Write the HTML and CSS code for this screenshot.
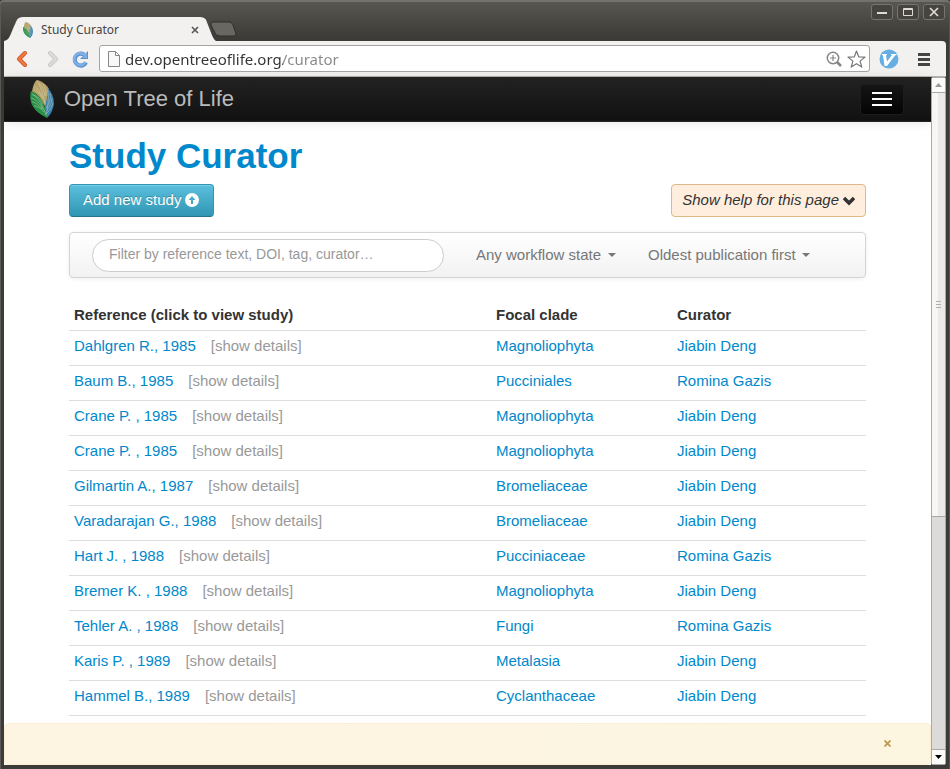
FILE: index.html
```html
<!DOCTYPE html>
<html lang="en">
<head>
<meta charset="utf-8">
<title>Study Curator</title>
<link rel="stylesheet" href="styles.css">
</head>
<body>
<svg class="defs" aria-hidden="true">
  <symbol id="leaf" viewBox="0 0 24 38">
    <path fill="#b5a066" d="M2 12C3 5 5 1 7 0c5 1 10 5 12 9l-3 20C12 19 7 13 2 12Z"/>
    <path fill="#3a80ad" d="M18 8c6 7 7 15 5 20-1 4-3 7-6 10-2-5-3-9-1-15 1-5 2-10 2-15Z"/>
    <path fill="#2a9049" d="M1 11c7 3 12 9 14 17 1 4 2 7 2 10C8 34 2 27 1 22c-1-4-1-8 0-11Z"/>
    <g fill="none" stroke="#dde4c8" stroke-width=".7" opacity=".6">
      <path d="M7 1c3 5 6 12 8 23M4 6c4 2 6 6 9 13M4 9c3 1 5 4 8 8M9 3c3 3 5 7 6 13M13 4c2 3 3 7 3 12"/>
      <path d="M18 10c1 9 0 17-2 25M20 13c1 5 0 10-4 15M22 18c0 4-2 8-5 12M23 23c-1 4-3 7-6 10"/>
      <path d="M2 14c7 4 11 12 14 21M1 18c5 1 9 6 12 11M2 22c4 0 7 4 10 7M4 26c4 0 7 3 10 6M3 15c5 1 8 5 10 9"/>
    </g>
  </symbol>
</svg>
<div class="window">
  <header class="titlebar">
    <div class="tab">
      <svg class="tab-shape" viewBox="0 0 212 26" preserveAspectRatio="none" aria-hidden="true"><path fill="#f2f1f0" d="M0 26C5 25 6 21 9 13L13 4Q15 1 19 1H196Q200 1 202 4L208 20Q210 25 212 26Z"/></svg>
      <svg class="tab-leaf" aria-hidden="true"><use href="#leaf"/></svg>
      <span class="tab-title">Study Curator</span>
      <button class="tab-close" aria-label="Close tab"><svg width="8" height="8" viewBox="0 0 8 8"><path d="M1 1l6 6M7 1L1 7" stroke="#555" stroke-width="1.6"/></svg></button>
    </div>
    <button class="new-tab" aria-label="New tab"><svg width="27" height="17" viewBox="0 0 27 17"><path fill="#686762" stroke="#2f2e2b" d="M3 1h16q3 0 4 3l3 9q0 2-3 2H10q-4 0-5-3L1 4Q0 1 3 1Z"/></svg></button>
    <div class="controls">
      <button aria-label="Minimize"><svg width="12" height="10" viewBox="0 0 12 10"><path fill="#dfdbd2" d="M1 5h10v2H1z"/></svg></button>
      <button aria-label="Maximize"><svg width="12" height="10" viewBox="0 0 12 10"><path fill="none" stroke="#dfdbd2" d="M1.500 1.500h9v7h-9zM1 2.500h10"/></svg></button>
      <button aria-label="Close"><svg width="12" height="10" viewBox="0 0 12 10"><path stroke="#dfdbd2" stroke-width="1.700" d="M2 1l8 8M10 1L2 9"/></svg></button>
    </div>
  </header>
  <div class="toolbar">
    <button aria-label="Back"><svg width="20" height="20" viewBox="0 0 20 20"><path d="M13 4l-6 6 6 6" fill="none" stroke="#c9501f" stroke-width="4" stroke-linecap="round" stroke-linejoin="round"/><path d="M13 4l-6 6 6 6" fill="none" stroke="#f0783f" stroke-width="2.500" stroke-linecap="round" stroke-linejoin="round"/></svg></button>
    <button aria-label="Forward"><svg width="20" height="20" viewBox="0 0 20 20"><path d="M9 4l6 6-6 6" fill="none" stroke="#c5c3c1" stroke-width="4" stroke-linecap="round" stroke-linejoin="round"/><path d="M9 4l6 6-6 6" fill="none" stroke="#dddbd9" stroke-width="2.500" stroke-linecap="round" stroke-linejoin="round"/></svg></button>
    <button aria-label="Reload"><svg width="20" height="20" viewBox="0 0 20 20"><path d="M14 5.500a6 6 0 1 0 2 8" fill="none" stroke="#5a90cf" stroke-width="4.200"/><path fill="#5a90cf" d="M18 2v8h-8z"/><path d="M14 5.500a6 6 0 1 0 1.500 7.500" fill="none" stroke="#7cb0e6" stroke-width="2.600"/><path fill="#7cb0e6" d="M17 4v5h-5z"/></svg></button>
    <div class="omnibox">
      <svg width="12" height="16" viewBox="0 0 12 16" aria-hidden="true"><path fill="#f8f8f8" stroke="#858585" d="M.5.500h7l4 4v11H.5zM7.500.500v4h4"/></svg>
      <input class="url" type="text" aria-label="Address" value="dev.opentreeoflife.org/curator">
      <button aria-label="Zoom"><svg width="16" height="16" viewBox="0 0 16 16"><g fill="none" stroke="#858585"><circle cx="7" cy="7" r="5.700" stroke-width="1.500"/><path d="M4 7h6M7 4v6" stroke-width="1.200"/><path d="M11 11l4 4" stroke-width="2.500"/></g></svg></button>
      <button aria-label="Bookmark"><svg width="19" height="18" viewBox="0 0 19 18"><path fill="#fff" stroke="#777" stroke-width="1.200" stroke-linejoin="round" d="M9.500 1l2.200 5.800 6.300.3-4.900 4 1.700 6-5.300-3.400-5.300 3.400 1.700-6L1 7.100l6.300-.3z"/></svg></button>
    </div>
    <button aria-label="Vimeo"><svg width="20" height="20" viewBox="0 0 20 20"><circle cx="10" cy="10" r="9.500" fill="#64aee3"/><path fill="#fff" d="M3 5h5v1l-1 .5 1 6L13 6h-1V5h5.500v1L16 6.500 8 17H5.500L4 6.500 3 6z"/></svg></button>
    <button class="chrome-menu" aria-label="Browser menu"><svg width="14" height="14" viewBox="0 0 14 14"><path fill="#444" d="M1 1h12v3H1zM1 6h12v3H1zM1 11h12v3H1z"/></svg></button>
  </div>
  <div class="viewport">
    <div class="page">
      <nav class="navbar">
        <a class="brand" href="#"><svg class="brand-leaf" aria-hidden="true"><use href="#leaf"/></svg>Open Tree of Life</a>
        <button class="nav-toggle" aria-label="Menu"><span></span><span></span><span></span></button>
      </nav>
      <main class="content">
        <h1>Study Curator</h1>
        <div class="actions">
          <button class="btn btn-info">Add new study <svg width="14" height="14" viewBox="0 0 14 14" aria-hidden="true"><path fill="#fff" fill-rule="evenodd" d="M7 0a7 7 0 1 1 0 14A7 7 0 0 1 7 0ZM7 3L3.500 7H6v4h2V7h2.500z"/></svg></button>
          <button class="btn btn-help">Show help for this page <svg width="12" height="14" viewBox="0 0 12 14" aria-hidden="true"><path fill="none" stroke="#333" stroke-width="3.400" d="M1 5l5 5 5-5"/></svg></button>
        </div>
        <form class="filters">
          <input class="search" type="text" aria-label="Filter studies" placeholder="Filter by reference text, DOI, tag, curator…">
          <span class="pick"><select aria-label="Workflow state"><option>Any workflow state</option></select></span>
          <span class="pick"><select aria-label="Sort order"><option>Oldest publication first</option></select></span>
        </form>
        <table>
          <colgroup><col><col class="col-clade"><col class="col-curator"></colgroup>
          <thead><tr><th>Reference (click to view study)</th><th>Focal clade</th><th>Curator</th></tr></thead>
          <tbody>
            <tr><td><a href="#">Dahlgren R., 1985</a><a class="more" href="#">[show details]</a></td><td><a href="#">Magnoliophyta</a></td><td><a href="#">Jiabin Deng</a></td></tr>
            <tr><td><a href="#">Baum B., 1985</a><a class="more" href="#">[show details]</a></td><td><a href="#">Pucciniales</a></td><td><a href="#">Romina Gazis</a></td></tr>
            <tr><td><a href="#">Crane P. , 1985</a><a class="more" href="#">[show details]</a></td><td><a href="#">Magnoliophyta</a></td><td><a href="#">Jiabin Deng</a></td></tr>
            <tr><td><a href="#">Crane P. , 1985</a><a class="more" href="#">[show details]</a></td><td><a href="#">Magnoliophyta</a></td><td><a href="#">Jiabin Deng</a></td></tr>
            <tr><td><a href="#">Gilmartin A., 1987</a><a class="more" href="#">[show details]</a></td><td><a href="#">Bromeliaceae</a></td><td><a href="#">Jiabin Deng</a></td></tr>
            <tr><td><a href="#">Varadarajan G., 1988</a><a class="more" href="#">[show details]</a></td><td><a href="#">Bromeliaceae</a></td><td><a href="#">Jiabin Deng</a></td></tr>
            <tr><td><a href="#">Hart J. , 1988</a><a class="more" href="#">[show details]</a></td><td><a href="#">Pucciniaceae</a></td><td><a href="#">Romina Gazis</a></td></tr>
            <tr><td><a href="#">Bremer K. , 1988</a><a class="more" href="#">[show details]</a></td><td><a href="#">Magnoliophyta</a></td><td><a href="#">Jiabin Deng</a></td></tr>
            <tr><td><a href="#">Tehler A. , 1988</a><a class="more" href="#">[show details]</a></td><td><a href="#">Fungi</a></td><td><a href="#">Romina Gazis</a></td></tr>
            <tr><td><a href="#">Karis P. , 1989</a><a class="more" href="#">[show details]</a></td><td><a href="#">Metalasia</a></td><td><a href="#">Jiabin Deng</a></td></tr>
            <tr><td><a href="#">Hammel B., 1989</a><a class="more" href="#">[show details]</a></td><td><a href="#">Cyclanthaceae</a></td><td><a href="#">Jiabin Deng</a></td></tr>
          </tbody>
        </table>
      </main>
      <div class="notice" role="status"><button aria-label="Dismiss"><svg width="7" height="7" viewBox="0 0 7 7"><path stroke="#c09853" stroke-width="1.800" d="M.5.500l6 6M6.500.500l-6 6"/></svg></button></div>
    </div>
    <div class="scrollbar" aria-hidden="true">
      <div class="arrow"><svg width="7" height="4" viewBox="0 0 7 4"><path fill="#9a9a98" d="M0 4l3.500-4L7 4z"/></svg></div>
      <div class="thumb"><svg width="5" height="7" viewBox="0 0 5 7"><path stroke="#b0afad" d="M0 .5h5M0 3.500h5M0 6.500h5"/></svg></div>
      <div class="track"></div>
      <div class="arrow"><svg width="7" height="4" viewBox="0 0 7 4"><path fill="#000" d="M0 0l3.500 4L7 0z"/></svg></div>
    </div>
  </div>
</div>
</body>
</html>
```
FILE: styles.css
```css
* { box-sizing: border-box; }
body {
  margin: 0;
  background: #3c3b37;
  color: #333;
  font: 15px/20px "Liberation Sans", Arial, sans-serif;
}
button {
  padding: 0;
  border: 0;
  background: none;
  font: inherit;
  color: inherit;
}
svg { display: block; }
a { color: #0088cc; text-decoration: none; }
.defs { position: absolute; width: 0; height: 0; }

.window {
  display: flex;
  flex-direction: column;
  height: 100vh;
  padding: 0 4px 4px;
  border-radius: 4px 4px 0 0;
  background: linear-gradient(#5a5852, #3c3b37 38px);
  box-shadow: inset 0 2px #74726d, inset 1px 0 #5b5a56, inset -1px 0 #55544f;
}
.titlebar {
  display: flex;
  flex: none;
  align-items: flex-end;
  height: 41px;
}
.tab {
  position: relative;
  display: flex;
  align-items: center;
  width: 212px;
  height: 25px;
  padding: 2px 17px 0 18px;
  font: 12px/16px "Noto Sans", sans-serif;
  color: #444;
}
.tab-shape { position: absolute; inset: 0; width: 100%; height: 100%; }
.tab-leaf { position: relative; width: 12px; height: 16px; margin-right: 7px; }
.tab-title { position: relative; flex: 1; }
.tab-close { position: relative; }
.new-tab { align-self: flex-end; margin: 0 0 3px -6px; }
.controls {
  display: flex;
  gap: 4px;
  align-self: flex-start;
  margin: 4px 1px 0 auto;
}
.controls button {
  display: grid;
  place-items: center;
  width: 22px;
  height: 16px;
  border: 1px solid #77756f;
  border-radius: 3px;
  background: #45443f;
}

.toolbar {
  display: flex;
  flex: none;
  align-items: center;
  gap: 9px;
  height: 36px;
  padding: 0 15px 0 8px;
  border-bottom: 1px solid #b6b4b2;
  border-radius: 0 4px 0 0;
  background: #f2f1f0;
}
.omnibox {
  display: flex;
  flex: 1;
  align-items: center;
  gap: 5px;
  height: 27px;
  padding: 0 3px 0 8px;
  border: 1px solid #a5a4a2;
  border-radius: 3px;
  background: #fff;
}
.url {
  flex: 1;
  min-width: 0;
  padding: 0;
  border: 0;
  outline: 0;
  background: linear-gradient(to right, #333 158px, #888 158px);
  background-clip: text;
  color: transparent;
  font: 15px/20px "Noto Sans", sans-serif;
}
.chrome-menu { margin-left: 9px; }

.viewport { display: flex; flex: 1; min-height: 0; }
.page {
  display: flex;
  flex: 1;
  flex-direction: column;
  min-width: 0;
  background: #fff;
}
.navbar {
  display: flex;
  flex: none;
  align-items: center;
  justify-content: space-between;
  height: 45px;
  padding: 0 27px 0 26px;
  border-bottom: 1px solid #252525;
  background: linear-gradient(#222, #111);
  box-shadow: 0 1px 10px rgba(0, 0, 0, .1);
}
.brand {
  display: flex;
  align-items: center;
  gap: 10px;
  color: #bbb;
  font-size: 22px;
}
.brand-leaf { width: 24px; height: 38px; }
.nav-toggle {
  display: flex;
  flex-direction: column;
  align-items: center;
  justify-content: center;
  gap: 4px;
  width: 44px;
  height: 31px;
  border: 1px solid #1c1c1c;
  border-radius: 4px;
  background: linear-gradient(#151515, #040404);
}
.nav-toggle span { width: 20px; height: 2px; background: #fff; }

.content { flex: 1; min-height: 0; overflow: hidden; padding: 14px 65px 0; }
h1 { margin: 0 0 8px; color: #0088cc; font-size: 35px; line-height: 40px; }
.actions { display: flex; justify-content: space-between; }
.btn {
  display: flex;
  align-items: center;
  gap: 4px;
  height: 33px;
  border: 1px solid;
  border-radius: 4px;
}
.btn-info {
  padding: 0 14px 2px 13px;
  border-color: #2f96b4 #2f96b4 #24748c;
  background: linear-gradient(#5bc0de, #2f96b4);
  box-shadow: inset 0 1px rgba(255, 255, 255, .2);
  color: #fff;
  text-shadow: 0 -1px rgba(0, 0, 0, .25);
}
.btn-help {
  padding: 0 10px 2px;
  border-color: #deb887;
  background: #ffeedd;
  font-style: italic;
}
.filters {
  display: flex;
  align-items: center;
  height: 46px;
  margin: 15px 0 22px;
  padding: 0 22px;
  border: 1px solid #d4d4d4;
  border-radius: 4px;
  background: linear-gradient(#fff, #f2f2f2);
  box-shadow: 0 1px 4px rgba(0, 0, 0, .067);
}
.search {
  flex: 0 1 352px;
  min-width: 0;
  height: 33px;
  margin-right: 32px;
  padding: 0 16px 2px;
  border: 1px solid #ccc;
  border-radius: 17px;
  background: #fff;
  font: 14px/20px "Liberation Sans", Arial, sans-serif;
}
.search::placeholder { color: #999; }
.pick { display: flex; flex: none; align-items: center; gap: 6px; color: #777; }
.pick + .pick { margin-left: 32px; }
.pick::after { content: ""; border: 4px solid transparent; border-top-color: #777; border-bottom: 0; }
.pick select {
  appearance: none;
  padding: 0;
  border: 0;
  background: none;
  color: #777;
  font: inherit;
}

table { width: 100%; border-collapse: separate; border-spacing: 0; table-layout: fixed; }
.col-clade { width: 181px; }
.col-curator { width: 194px; }
th, td { padding: 5px; text-align: left; }
td { padding-bottom: 9px; border-top: 1px solid #ddd; }
tr:last-child td { border-bottom: 1px solid #ddd; }
.more { margin-left: 15px; color: #999; }

.notice {
  display: flex;
  flex: none;
  align-items: center;
  justify-content: flex-end;
  height: 42px;
  padding: 0 39px 2px 0;
  border: 1px solid #fbeed5;
  border-radius: 4px;
  background: linear-gradient(to right, #fef4e2, #fcf6e1);
}

.scrollbar {
  display: flex;
  flex: none;
  flex-direction: column;
  width: 15px;
  border: 1px solid #a9a8a6;
  border-radius: 2px;
  background: #dcdbda;
}
.arrow { display: grid; flex: none; place-items: center; height: 14px; background: #fbfbfa; }
.thumb {
  display: grid;
  flex: 425;
  place-items: center;
  border: solid #a9a8a6;
  border-width: 1px 0;
  background: linear-gradient(to right, #f7f6f5 50%, #ebeae8 50%);
}
.track { flex: 233; border-bottom: 1px solid #a9a8a6; }
```
